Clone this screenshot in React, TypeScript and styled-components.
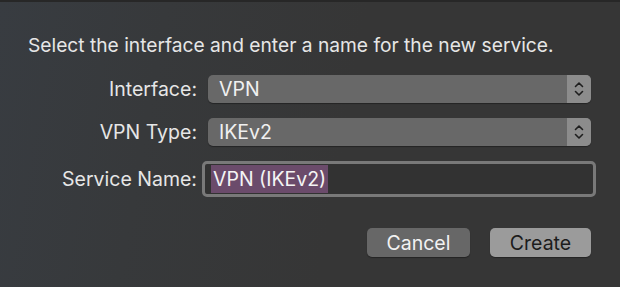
import React from "react";
import styled, { createGlobalStyle } from "styled-components";

const Global = createGlobalStyle`
  html, body { margin: 0; padding: 0; background: #363636; }
  * { box-sizing: border-box; }
`;

const Dialog = styled.div`
  width: 620px;
  height: 287px;
  overflow: hidden;
  background: linear-gradient(100deg, #383c41 0%, #37393b 25%, #363636 55%, #363636 100%);
  border-top: 2px solid #272727;
  font-family: Inter, "Liberation Sans", sans-serif;
  color: #e6e6e6;
  display: flex;
  flex-direction: column;
  padding: 31px 29px 0 28px;
`;

const Title = styled.div`
  font-size: 19.2px;
  line-height: 24px;
  margin-bottom: 18px;
  white-space: nowrap;
`;

const Form = styled.div`
  display: grid;
  grid-template-columns: 169px 383px;
  grid-template-rows: 28px 28px 36px;
  column-gap: 11px;
  row-gap: 15px;
`;

const Label = styled.div`
  font-size: 19.5px;
  text-align: right;
  align-self: center;
  white-space: nowrap;
`;

const Popup = styled.div`
  display: flex;
  height: 28px;
  border-radius: 5px;
  overflow: hidden;
  background: #686868;
  box-shadow: 0 1px 1px rgba(0, 0, 0, 0.35);
`;

const PopupValue = styled.div`
  flex: 1;
  font-size: 19.5px;
  line-height: 28px;
  padding-left: 11px;
  color: #f0f0f0;
`;

const PopupArrows = styled.div`
  width: 24px;
  background: #8c8c8c;
  display: flex;
  align-items: center;
  justify-content: center;
`;

const TextField = styled.div`
  margin: 0 -5px 0 -6px;
  height: 36px;
  border: 3px solid #797979;
  border-radius: 5px;
  background: #323232;
  display: flex;
  align-items: center;
  padding-left: 6px;
`;

const Selection = styled.span`
  background: #6b4b6b;
  color: #f4f4f4;
  font-size: 19.5px;
  line-height: 28px;
  padding: 0 2px;
`;

const Buttons = styled.div`
  display: flex;
  justify-content: flex-end;
  gap: 20px;
  margin-top: 31px;
`;

const Button = styled.button<{ $primary?: boolean }>`
  width: ${(p) => (p.$primary ? "101px" : "103px")};
  height: 29px;
  border: none;
  border-radius: 5px;
  font-family: Inter, "Liberation Sans", sans-serif;
  font-size: 19.5px;
  padding: 0;
  background: ${(p) => (p.$primary ? "#9b9b9b" : "#676767")};
  color: ${(p) => (p.$primary ? "#1c1c1c" : "#f2f2f2")};
  box-shadow: 0 1px 1px rgba(0, 0, 0, 0.35);
`;

const Arrows = () => (
  <svg width="12" height="20" viewBox="0 0 12 20" fill="none" stroke="#1e1e1e" strokeWidth="1.6" strokeLinecap="round" strokeLinejoin="round">
    <path d="M2.5 7.5 L6 4 L9.5 7.5" />
    <path d="M2.5 12.5 L6 16 L9.5 12.5" />
  </svg>
);

export default function App() {
  return (
    <>
      <Global />
      <Dialog>
        <Title>Select the interface and enter a name for the new service.</Title>
        <Form>
          <Label>Interface:</Label>
          <Popup>
            <PopupValue>VPN</PopupValue>
            <PopupArrows><Arrows /></PopupArrows>
          </Popup>
          <Label>VPN Type:</Label>
          <Popup>
            <PopupValue>IKEv2</PopupValue>
            <PopupArrows><Arrows /></PopupArrows>
          </Popup>
          <Label>Service Name:</Label>
          <TextField>
            <Selection>VPN (IKEv2)</Selection>
          </TextField>
        </Form>
        <Buttons>
          <Button>Cancel</Button>
          <Button $primary>Create</Button>
        </Buttons>
      </Dialog>
    </>
  );
}
